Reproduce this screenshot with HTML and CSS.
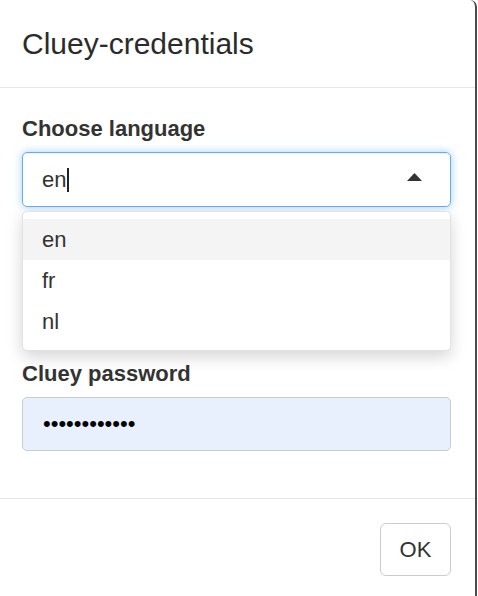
FILE: index.html
```html
<!DOCTYPE html>
<html lang="en">
<head>
<meta charset="utf-8">
<title>Cluey-credentials</title>
<link rel="stylesheet" href="styles.css">
</head>
<body>
<div class="modal">
  <div class="modal-header">
    <h4 class="modal-title">Cluey-credentials</h4>
  </div>
  <div class="modal-body">
    <div class="form-group lang-group">
      <label class="control-label">Choose language</label>
      <div class="select">
        <div class="select-input">
          <span class="value">en</span><span class="cursor"></span>
          <svg class="arrow" width="15" height="8" viewBox="0 0 15 8"><polygon points="0,8 7.5,0 15,8" fill="#333"/></svg>
        </div>
        <div class="dropdown">
          <div class="option active">en</div>
          <div class="option">fr</div>
          <div class="option">nl</div>
        </div>
      </div>
    </div>
    <div class="form-group">
      <label class="control-label">Cluey password</label>
      <input class="form-control password" type="password" value="abcdefghijkl">
    </div>
  </div>
  <div class="modal-footer">
    <button class="btn" type="button">OK</button>
  </div>
</div>
</body>
</html>
```

FILE: styles.css
```css
* { box-sizing: border-box; }

html, body {
  margin: 0;
  padding: 0;
  background: #fff;
  font-family: "Liberation Sans", Arial, Helvetica, sans-serif;
  color: #333;
}

.modal {
  width: 477px;
  height: 596px;
  background: #fff;
  border-right: 2px solid #4a4a4a;
  border-top-right-radius: 7px;
  overflow: hidden;
}

.modal-header {
  height: 88px;
  padding: 22px 24px 0 22px;
  border-bottom: 1px solid #e5e5e5;
}

.modal-title {
  margin: 0;
  font-size: 30px;
  line-height: 43px;
  font-weight: normal;
  color: #2b2b2b;
}

.modal-body {
  padding: 25px 24px 47px 22px;
}

.form-group { display: flex; flex-direction: column; }

.lang-group { margin-bottom: 151px; }

.control-label {
  display: block;
  font-size: 22px;
  line-height: 31px;
  font-weight: bold;
  color: #333;
  margin-bottom: 8px;
}

.select { position: relative; }

.select-input {
  height: 55px;
  border: 1px solid #66afe9;
  border-radius: 5px;
  padding: 0 28px 0 19px;
  display: flex;
  align-items: center;
  font-size: 22px;
  color: #333;
  box-shadow: inset 0 1px 1px rgba(0,0,0,.075), 0 0 8px rgba(102,175,233,.6);
}

.cursor {
  width: 1.5px;
  height: 24px;
  background: #222;
  margin-left: 1px;
}

.arrow {
  margin-left: auto;
  margin-bottom: 5px;
}

.dropdown {
  position: absolute;
  left: 0;
  right: 0;
  top: 59px;
  background: #fff;
  border: 1px solid #e2e2e2;
  border-radius: 5px;
  padding: 7px 0 8px;
  box-shadow: 0 6px 16px rgba(0,0,0,.17);
  z-index: 2;
}

.option {
  height: 41px;
  line-height: 41px;
  padding-left: 19px;
  font-size: 22px;
  color: #333;
}

.option.active { background: #f4f4f4; }

.form-control {
  height: 54px;
  border: 1px solid #c8ccd2;
  border-radius: 5px;
  padding: 0 20px;
  font-family: "Liberation Sans", Arial, sans-serif;
  font-size: 22px;
  color: #000;
  outline: none;
}

.password {
  background: #e8f0fe;
}

.modal-footer {
  border-top: 1px solid #e5e5e5;
  padding: 24px 24px 0 22px;
  display: flex;
  justify-content: flex-end;
}

.btn {
  width: 71px;
  height: 53px;
  background: #fff;
  border: 1px solid #ccc;
  border-radius: 6px;
  font-family: "Liberation Sans", Arial, sans-serif;
  font-size: 22px;
  color: #333;
  padding: 0;
}
```
